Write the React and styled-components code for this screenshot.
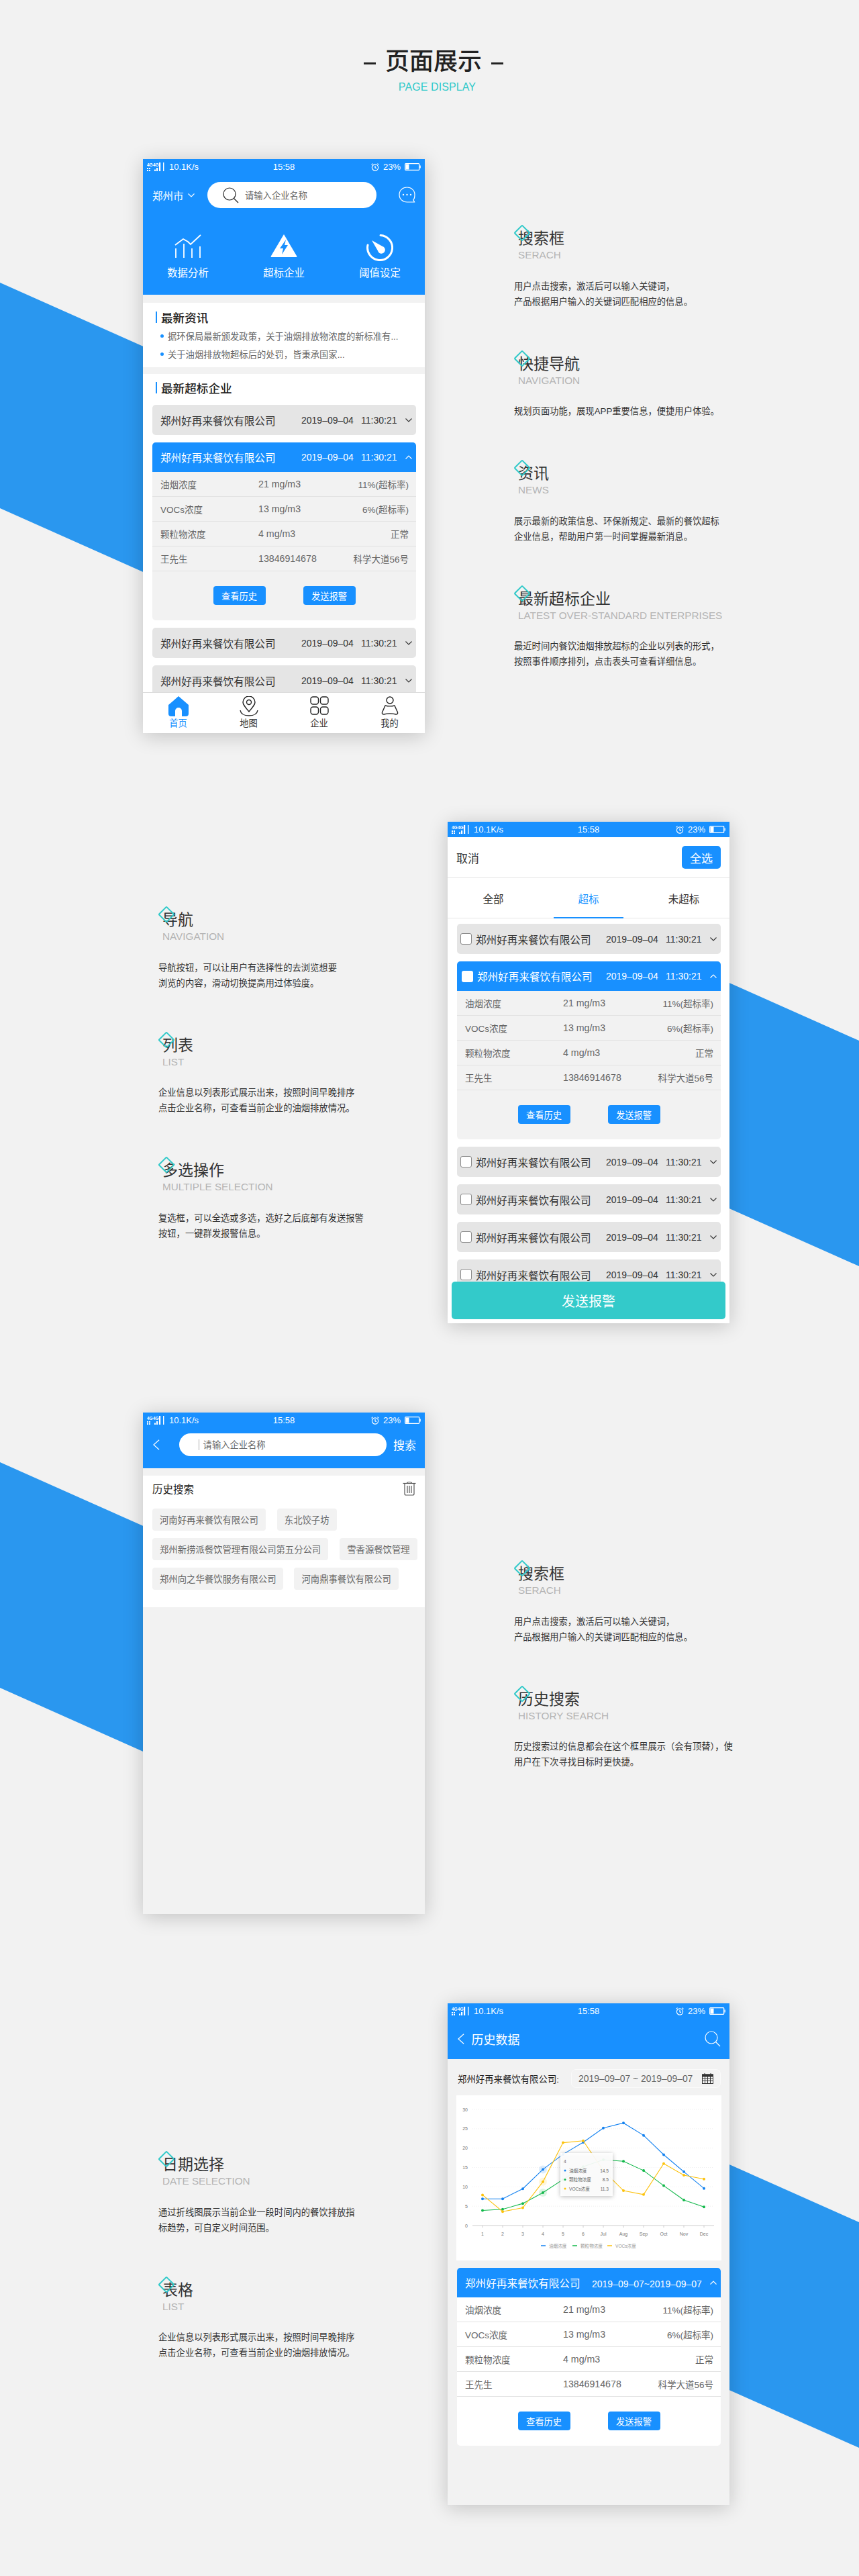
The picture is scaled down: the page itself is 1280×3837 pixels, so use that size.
import React from "react";
import styled, { createGlobalStyle } from "styled-components";

const BLUE = "#1890ff";
const TEAL = "#2fc9c9";
const Global = createGlobalStyle`
  html, body { margin: 0; padding: 0; background: #f2f2f2; }
  * { box-sizing: border-box; }
  body { font-family: "Liberation Sans", "Noto Sans CJK SC", sans-serif; color: #333; }
`;

const Page = styled.div`position: relative; width: 1280px; height: 3837px; overflow: hidden; background: #f2f2f2;`;
const Backdrop = styled.svg`position: absolute; left: 0; top: 0;`;
const Content = styled.div`position: relative;`;

const Header = styled.header`display: flex; flex-direction: column; align-items: center; padding: 72px 0 97px 12px;`;
const TitleRow = styled.div`display: flex; align-items: center; gap: 14px; height: 40px;`;
const Dash = styled.i`display: block; width: 18px; height: 3px; background: #222; margin-top: 4px;`;
const Title = styled.h1`margin: 0; font-size: 36px; line-height: 40px; font-weight: 500; color: #222; letter-spacing: 0;`;
const Subtitle = styled.div`margin: 8px 0 0 11px; font-size: 16px; line-height: 20px; color: ${TEAL}; letter-spacing: 0.1px;`;

const Section = styled.section`
  display: grid;
  padding-left: ${p => (p.$phoneRight ? "236px" : "213px")};
  grid-template-columns: ${p => (p.$phoneRight ? "431px 420px" : "420px 1fr")};
  column-gap: ${p => (p.$phoneRight ? "0" : "133px")};
  margin-bottom: ${p => p.$after || 133}px;
`;
const Notes = styled.div`padding-top: ${p => p.$top}px;`;
const Note = styled.div`margin-bottom: 66px;`;
const NoteTitle = styled.h3`
  position: relative; margin: 0 0 0 6px; font-size: 23px; line-height: 30px; font-weight: 400; color: #333;
  &::before {
    content: ""; position: absolute; left: -3px; top: -2px; width: 14px; height: 14px;
    border: 2.5px solid ${TEAL}; border-radius: 2px; transform: rotate(45deg);
  }
`;
const NoteEn = styled.div`margin-left: 6px; font-size: 15.3px; line-height: 20px; color: #b4b4b4; white-space: nowrap;`;
const NoteBody = styled.p`margin: 24.5px 0 0; font-size: 13.3px; line-height: 23px; color: #333; white-space: nowrap;`;

const Phone = styled.div`
  display: flex; flex-direction: column; width: 420px; height: ${p => p.$h}px; overflow: hidden;
  background: ${p => p.$bg || "#fff"};
  box-shadow: 0 4px 28px rgba(0,0,0,.2);
`;
const StatusBar = styled.div`
  flex: none; display: grid; grid-template-columns: 1fr auto 1fr; align-items: center; height: 23px; padding: 0 6px;
  background: ${BLUE}; color: #fff; font-size: 13px;
`;
const StatusSide = styled.div`display: flex; align-items: center; gap: 6px; justify-content: ${p => (p.$end ? "flex-end" : "flex-start")};`;

const TopBar = styled.div`flex: none; background: ${BLUE}; color: #fff;`;
const SearchRow = styled.div`display: flex; align-items: center; height: 39px; margin-top: 11px; padding-left: 14px;`;
const City = styled.div`display: flex; align-items: center; gap: 6px; width: 82px; font-size: 15.5px;`;
const SearchPill = styled.div`
  display: flex; align-items: center; width: ${p => p.$w}px; height: ${p => p.$h}px; padding-left: ${p => p.$pad}px; gap: ${p => p.$gap}px;
  margin-left: ${p => p.$ml || 0}px;
  border-radius: 20px; background: #fff; color: #666; font-size: 13.3px;
`;
const ChatSlot = styled.div`margin-left: 33px; display: flex;`;
const Shortcuts = styled.div`display: grid; grid-template-columns: repeat(3, 143px); justify-content: center; margin-top: 39px; padding-bottom: 22px;`;
const Shortcut = styled.div`display: flex; flex-direction: column; align-items: center; font-size: 15.4px;`;
const ShortcutIcon = styled.div`height: 36px; margin-bottom: 12px; display: flex; align-items: flex-start;`;
const ShortcutLabel = styled.div`line-height: 20px;`;

const Gap = styled.div`flex: none; height: ${p => p.$h}px; background: #f2f2f2;`;
const White = styled.div`flex: none; background: #fff;`;
const SectionHead = styled.div`display: flex; align-items: center; gap: 6px; height: 20px; padding-left: 19px; font-size: 17.6px; font-weight: 500; color: #222;
  &::before { content: ""; width: 2px; height: 17px; background: ${BLUE}; }
`;
const NewsBlock = styled(White)`padding-top: 11px; padding-bottom: 6px; height: 96px;`;
const NewsList = styled.ul`list-style: none; margin: 5px 0 0; padding: 0 0 0 26px;`;
const NewsItem = styled.li`display: flex; align-items: center; gap: 6px; height: 27px; font-size: 13.3px; color: #666; white-space: nowrap;
  &::before { content: ""; width: 5px; height: 5px; border-radius: 50%; background: ${BLUE}; }
`;
const ListHeadBlock = styled(White)`padding: 10px 0 6px;`;
const Scroll = styled.div`flex: 1; min-height: 0; overflow: hidden; background: #fff; padding: ${p => p.$top}px 13px 0 14px;`;
const CardList = styled.div`display: flex; flex-direction: column; gap: ${p => p.$gap || 11}px;`;

const Card = styled.div`flex: none; width: 393px; border-radius: 5px; overflow: hidden; background: ${p => p.$white ? "#fff" : "#f2f2f2"};`;
const CardHead = styled.div`
  display: flex; align-items: center; height: ${p => (p.$active ? 44 : 45)}px;
  padding-left: ${p => p.$pad}px; padding-right: 6px; gap: 6px;
  background: ${p => (p.$active ? BLUE : "#e5e5e5")}; color: ${p => (p.$active ? "#fff" : "#333")};
`;
const Check = styled.i`flex: none; width: 17px; height: 17px; border-radius: 3px; background: #fff; border: ${p => (p.$active ? "0" : "1px solid #8a8a8a")};`;
const CardName = styled.div`font-size: 15.6px; white-space: nowrap;`;
const CardMeta = styled.div`position: relative; margin-left: auto; display: grid; grid-template-columns: ${p => p.$range ? "155px 10px" : "79px 52px 10px"}; column-gap: ${p => p.$range ? "0" : "10px"}; width: 165px; align-items: center; font-size: 14px; white-space: nowrap; color: inherit;
  ${p => p.$range ? "" : "& > svg { margin-left: 4px; }"}
`;
const Range = styled.span`margin-left: -21px; padding-top: 4px;`;
const RowItem = styled.div`
  display: grid; grid-template-columns: 146px 1fr auto; align-items: center; height: 37px; padding: 0 11px 0 12px;
  border-bottom: 1px solid #e2e2e2; font-size: 13.5px; color: #666; white-space: nowrap;
`;
const RowValue = styled.span`font-size: 14.2px;`;
const Actions = styled.div`display: flex; justify-content: center; gap: 56px; padding: 22px 0 23px;`;
const SmallButton = styled.div`width: 78px; height: 28px; border-radius: 4px; background: ${BLUE}; color: #fff; font-size: 13.3px; display: flex; align-items: center; justify-content: center;`;

const Nav = styled.nav`flex: none; display: grid; grid-template-columns: repeat(4, 1fr); height: 61px; background: #fff; border-top: 1px solid #ddd;`;
const NavItem = styled.div`display: flex; flex-direction: column; align-items: center; padding-top: 5px; font-size: 13.3px; color: ${p => (p.$on ? BLUE : "#333")};`;
const NavIcon = styled.div`height: 30px; display: flex;`;
const NavLabel = styled.div`line-height: 16px; margin-top: 3px;`;

const ActionBar = styled.div`flex: none; display: flex; align-items: center; justify-content: space-between; height: 61px; padding: 0 13px 0 13px; border-bottom: 1px solid #e5e5e5; background: #fff; font-size: 17px; color: #333;`;
const SelectAll = styled.div`width: 58px; height: 34px; border-radius: 5px; background: ${BLUE}; color: #fff; display: flex; align-items: center; justify-content: center;`;
const Tabs = styled.div`flex: none; display: grid; grid-template-columns: repeat(3, 142px); justify-content: center; height: 60px; border-bottom: 1px solid #e5e5e5; background: #fff;`;
const Tab = styled.div`display: flex; align-items: center; justify-content: center; position: relative; font-size: 15.5px; color: ${p => (p.$on ? BLUE : "#333")};
  ${p => p.$on ? `&::after { content: ""; position: absolute; left: 19px; right: 19px; bottom: -1px; height: 2px; background: ${BLUE}; }` : ""}
`;
const Footer = styled.div`flex: none; padding: 0 6px 6px; background: transparent;`;
const SendButton = styled.div`height: 56px; border-radius: 5px; background: #33caca; color: #fff; font-size: 20px; display: flex; align-items: center; justify-content: center;`;

const SearchHead = styled.div`flex: none; display: flex; align-items: center; height: 60px; background: ${BLUE}; color: #fff; padding: 0 13px 11px 15px;`;
const Caret = styled.i`width: 1px; height: 16px; background: #aaa;`;
const SearchText = styled.div`margin-left: auto; font-size: 17px;`;
const HistoryBlock = styled(White)`height: 196px; padding: 0 13px 0 14px;`;
const HistoryHead = styled.div`display: flex; align-items: center; justify-content: space-between; height: 38px; font-size: 15.5px; color: #222;`;
const TagRows = styled.div`display: flex; flex-direction: column; gap: 11px; margin-top: 11px;`;
const TagRow = styled.div`display: flex; gap: ${p => p.$gap || 17}px;`;
const Tag = styled.div`height: 33px; padding: 0 11px; border-radius: 4px; background: #f2f2f2; color: #666; font-size: 13.35px; display: flex; align-items: center; white-space: nowrap;`;

const TitleHead = styled.div`flex: none; display: flex; align-items: center; height: 60px; background: ${BLUE}; color: #fff; font-size: 18px; gap: 11px; padding: 0 13px 0 15px;`;
const Spacer = styled.div`flex: 1;`;
const FilterRow = styled.div`flex: none; display: flex; align-items: center; justify-content: space-between; height: 28px; margin-top: 15px; padding: 0 13px 0 15px; font-size: 13.4px; color: #222; white-space: nowrap;`;
const DateInput = styled.div`display: flex; align-items: center; justify-content: space-between; width: 223px; height: 28px; padding: 0 10px; border: 1px solid #fafafa; border-radius: 7px; background: #f3f3f3; font-size: 13.9px; color: #666;`;
const ChartCard = styled.div`flex: none; width: 395px; height: 246px; margin: 11px 0 11px 13px; background: #fff; display: flex;`;
const Pad = styled.div`padding: 0 13px 0 14px;`;

/* icons */
const Chevron = ({ up, c = "currentColor", s = 10 }) => (
  <svg width={s} height={s * 0.6} viewBox="0 0 10 6" fill="none" stroke={c} strokeWidth="1.1">
    <polyline points={up ? "0.5,5.5 5,1 9.5,5.5" : "0.5,0.5 5,5 9.5,0.5"} />
  </svg>
);
const Signal = () => (
  <svg width="27" height="13" viewBox="0 0 27 13" fill="#fff">
    <text x="0" y="6" fontSize="6.5" fontWeight="700" fontFamily="Liberation Sans">4G</text>
    <text x="9" y="6" fontSize="6.5" fontWeight="700" fontFamily="Liberation Sans">4G</text>
    <rect x="0" y="8" width="2" height="2" /><rect x="3" y="8" width="2" height="2" />
    <rect x="0" y="11" width="2" height="2" /><rect x="3" y="11" width="2" height="2" />
    <rect x="11" y="10.5" width="2" height="2.5" /><rect x="14" y="8" width="2.2" height="5" />
    <rect x="18" y="0" width="2.2" height="13" /><rect x="24" y="0" width="1.4" height="13" />
  </svg>
);
const Alarm = () => (
  <svg width="12" height="12" viewBox="0 0 12 12" fill="none" stroke="#fff" strokeWidth="1.2">
    <circle cx="6" cy="6.5" r="4.6" /><polyline points="6,3.8 6,6.8 8,7.6" /><path d="M0.5 2.4 L2.6 0.6 M11.5 2.4 L9.4 0.6" />
  </svg>
);
const Battery = () => (
  <svg width="24" height="11" viewBox="0 0 24 11">
    <rect x="0.7" y="0.7" width="21" height="9.6" rx="1" fill="none" stroke="#fff" strokeWidth="1.3" />
    <rect x="1.5" y="1.5" width="5" height="8" fill="#fff" /><rect x="22.4" y="3.5" width="1.4" height="4" fill="#fff" />
  </svg>
);
const Status = () => (
  <StatusBar>
    <StatusSide><Signal /><span>10.1K/s</span></StatusSide>
    <span>15:58</span>
    <StatusSide $end><Alarm /><span>23%</span><Battery /></StatusSide>
  </StatusBar>
);
const Magnifier = ({ c = "#222", s = 24, w = 1.2 }) => (
  <svg width={s} height={s} viewBox="0 0 24 24" fill="none" stroke={c} strokeWidth={w}>
    <circle cx="10" cy="10" r="9" /><line x1="16.5" y1="16.5" x2="23" y2="23" />
  </svg>
);
const Chat = () => (
  <svg width="25" height="25" viewBox="0 0 25 25" fill="none" stroke="#fff" strokeWidth="1.2">
    <path d="M12.5 1C6 1 1 5.6 1 12s5 11 11.5 11h11l-1.6-3.4C24 17.6 24 14.5 24 12 24 5.6 19 1 12.5 1z" />
    <circle cx="7" cy="12" r="1.2" fill="#fff" stroke="none" /><circle cx="12.5" cy="12" r="1.2" fill="#fff" stroke="none" /><circle cx="18" cy="12" r="1.2" fill="#fff" stroke="none" />
  </svg>
);
const AnalysisIcon = () => (
  <svg width="40" height="36" viewBox="0 0 40 36" fill="none" stroke="#fff" strokeWidth="1.8">
    <polyline points="1,16 13,7 20,11 24,15 39,1" />
    <line x1="2" y1="21" x2="2" y2="35" /><line x1="14" y1="14" x2="14" y2="35" /><line x1="26" y1="21" x2="26" y2="35" /><line x1="38" y1="18" x2="38" y2="35" />
  </svg>
);
const WarnIcon = () => (
  <svg width="40" height="36" viewBox="0 0 40 36">
    <path d="M20 0 L39.5 33 a1 1 0 0 1-1 1 H1.5 a1 1 0 0 1-1-1z" fill="#fff" />
    <path d="M23 8 L14 21 H19 L17 30 L26 16 H21z" fill={BLUE} />
  </svg>
);
const DialIcon = () => (
  <svg width="40" height="40" viewBox="0 0 40 40">
    <path d="M21 1.5 A18.5 18.5 0 1 1 2 16" fill="none" stroke="#fff" strokeWidth="3" strokeLinecap="round" />
    <path d="M8 9 L24 18 A5.5 5.5 0 1 1 17 24.5z" fill="#fff" />
  </svg>
);
const Home = () => (
  <svg width="30" height="30" viewBox="0 0 30 30"><path d="M15 0 L30 13 V26 a4 4 0 0 1-4 4 H20 V22 a5 5 0 0 0-10 0 V30 H4 a4 4 0 0 1-4-4 V13z" fill={BLUE} /></svg>
);
const Pin = () => (
  <svg width="28" height="30" viewBox="0 0 28 30" fill="none" stroke="#222" strokeWidth="1.4">
    <path d="M14 23 C8 16 5 12.5 5 9 A9 9 0 0 1 23 9 C23 12.5 20 16 14 23z" /><circle cx="14" cy="9" r="3.5" />
    <path d="M1 21 C2 27 8 29 14 29 C20 29 26 27 27 21" />
  </svg>
);
const Grid4 = () => (
  <svg width="28" height="28" viewBox="0 0 28 28" fill="none" stroke="#222" strokeWidth="1.4">
    <rect x="1" y="1" width="11.5" height="11" rx="3.5" /><rect x="15.5" y="1" width="11.5" height="11" rx="3.5" />
    <rect x="1" y="16" width="11.5" height="11" rx="3.5" /><rect x="15.5" y="16" width="11.5" height="11" rx="3.5" />
  </svg>
);
const User = () => (
  <svg width="26" height="28" viewBox="0 0 26 28" fill="none" stroke="#222" strokeWidth="1.4">
    <circle cx="13" cy="6" r="5" />
    <path d="M6 14 C10 15 16 15 20 14 L24.5 24 C25 26 24 27 22 27 C16 25.5 10 25.5 4 27 C2 27 1 26 1.5 24z" />
  </svg>
);
const Back = ({ h = 16 }) => (
  <svg width={h * 0.6} height={h} viewBox="0 0 10 16" fill="none" stroke="#fff" strokeWidth="1.2"><polyline points="9.5,0.5 1,8 9.5,15.5" /></svg>
);
const Trash = () => (
  <svg width="20" height="22" viewBox="0 0 20 22" fill="none" stroke="#555" strokeWidth="1.2">
    <line x1="0.5" y1="3.5" x2="19.5" y2="3.5" /><path d="M6.5 3 C7 1 13 1 13.5 3" />
    <path d="M3 4 V19 a2 2 0 0 0 2 2 H15 a2 2 0 0 0 2-2 V4" /><line x1="7" y1="7" x2="7" y2="18" /><line x1="10" y1="7" x2="10" y2="18" /><line x1="13" y1="7" x2="13" y2="18" />
  </svg>
);
const Calendar = () => (
  <svg width="17" height="16" viewBox="0 0 17 16" fill="none" stroke="#333" strokeWidth="1">
    <rect x="0.5" y="2" width="16" height="13.5" /><rect x="0.5" y="2" width="16" height="3" fill="#333" />
    <path d="M4 0 V3 M13 0 V3 M0.5 8 H16.5 M0.5 11.5 H16.5 M4.5 5 V15.5 M8.5 5 V15.5 M12.5 5 V15.5" />
  </svg>
);

/* chart */
const series = [
  { c: "#1482f0", v: [6.9, 6.9, 9.5, 14.5, 18.4, 21.5, 25.2, 26.5, 23.3, 18.3, 13.9, 9.6] },
  { c: "#12b84a", v: [3.9, 4.2, 5.7, 8.5, 11.9, 15.2, 17, 16.6, 14.2, 10.3, 6.6, 4.8] },
  { c: "#fcc20c", v: [7.9, 3.6, 4.6, 11.3, 21.4, 21.9, 14.2, 9, 8, 16, 13, 12] },
];
const months = ["1", "2", "3", "4", "5", "6", "Jul", "Aug", "Sep", "Oct", "Nov", "Dec"];
const px = i => 39 + i * 30;
const py = v => 194 - v * (173 / 30);
const tick = { fontSize: 7, fill: "#777", fontFamily: "Liberation Sans" };
const small = { fontSize: 6.6, fill: "#666", fontFamily: "Liberation Sans, Noto Sans CJK SC" };
const ChartTip = styled.rect`filter: drop-shadow(0 1px 3px rgba(0,0,0,.3));`;
const Chart = () => (
  <svg width="395" height="246" viewBox="0 0 395 246">
    {[5, 10, 15, 20, 25, 30].map(v => (
      <line key={v} x1="24" x2="384" y1={py(v)} y2={py(v)} stroke="#eee" strokeDasharray="1 2" />
    ))}
    <line x1="24" x2="384" y1="194" y2="194" stroke="#ccc" />
    {[0, 5, 10, 15, 20, 25, 30].map(v => (
      <text key={v} x="17" y={py(v) + 2.5} textAnchor="end" {...tick}>{v}</text>
    ))}
    {months.map((m, i) => (
      <g key={m}>
        <line x1={px(i)} x2={px(i)} y1="194" y2="197" stroke="#ccc" />
        <text x={px(i)} y="208.5" textAnchor="middle" {...tick}>{m}</text>
      </g>
    ))}
    {series.map(s => (
      <g key={s.c}>
        <polyline fill="none" stroke={s.c} strokeWidth="1.1" points={s.v.map((v, i) => `${px(i)},${py(v)}`).join(" ")} />
        <circle cx={px(3)} cy={py(s.v[3])} r="6" fill={s.c} opacity=".15" />
        {s.v.map((v, i) => <circle key={i} cx={px(i)} cy={py(v)} r="2" fill={s.c} />)}
      </g>
    ))}
    <ChartTip x="155" y="86" width="78" height="64" fill="#fff" fillOpacity=".92" />
    <text x="160" y="101" {...small}>4</text>
    {[["油烟浓度", "14.5", 0], ["颗粒物浓度", "8.5", 1], ["VOCs浓度", "11.3", 2]].map(([l, n, i]) => (
      <g key={l}>
        <circle cx="162" cy={112 + i * 13.5} r="1.5" fill={series[i].c} />
        <text x="168" y={114.5 + i * 13.5} {...small}>{l}</text>
        <text x="227" y={114.5 + i * 13.5} textAnchor="end" {...small}>{n}</text>
      </g>
    ))}
    {[["油烟浓度", 126, 0], ["颗粒物浓度", 173, 1], ["VOCs浓度", 225, 2]].map(([l, x, i]) => (
      <g key={l}>
        <line x1={x} x2={x + 7} y1="224" y2="224" stroke={series[i].c} strokeWidth="1.5" />
        <text x={x + 12} y="226.5" {...small} fill="#999">{l}</text>
      </g>
    ))}
  </svg>
);

/* shared pieces */
const NAME = "郑州好再来餐饮有限公司";
const Meta = ({ up }) => (
  <CardMeta><span>2019–09–04</span><span>11:30:21</span><Chevron up={up} /></CardMeta>
);
const ClosedCard = ({ check }) => (
  <Card>
    <CardHead $pad={check ? 5 : 12}>
      {check && <Check />}<CardName>{NAME}</CardName><Meta />
    </CardHead>
  </Card>
);
const Details = () => (
  <>
    <RowItem><span>油烟浓度</span><RowValue>21 mg/m3</RowValue><span>11%(超标率)</span></RowItem>
    <RowItem><span>VOCs浓度</span><RowValue>13 mg/m3</RowValue><span>6%(超标率)</span></RowItem>
    <RowItem><span>颗粒物浓度</span><RowValue>4 mg/m3</RowValue><span>正常</span></RowItem>
    <RowItem><span>王先生</span><RowValue>13846914678</RowValue><span>科学大道56号</span></RowItem>
    <Actions><SmallButton>查看历史</SmallButton><SmallButton>发送报警</SmallButton></Actions>
  </>
);
const OpenCard = ({ check }) => (
  <Card>
    <CardHead $active $pad={check ? 7 : 12}>
      {check && <Check $active />}<CardName>{NAME}</CardName><Meta up />
    </CardHead>
    <Details />
  </Card>
);
const Block = ({ t, en, lines }) => (
  <Note>
    <NoteTitle>{t}</NoteTitle>
    <NoteEn>{en}</NoteEn>
    <NoteBody>{lines[0]}{lines[1] && <br />}{lines[1]}</NoteBody>
  </Note>
);
const band = (x1, t1, x2, t2) => `${x1},${t1} ${x2},${t2} ${x2},${t2 + 336} ${x1},${t1 + 336}`;

export default function App() {
  return (
    <Page>
      <Global />
      <Backdrop width="1280" height="3837" viewBox="0 0 1280 3837">
        <polygon fill="#2a97ef" points={band(0, 421, 300, 554.5)} />
        <polygon fill="#2a97ef" points={band(900, 1381, 1280, 1550)} />
        <polygon fill="#2a97ef" points={band(0, 2178, 300, 2311.5)} />
        <polygon fill="#2a97ef" points={band(900, 3141, 1280, 3310)} />
      </Backdrop>
      <Content>
        <Header>
          <TitleRow><Dash /><Title>页面展示</Title><Dash /></TitleRow>
          <Subtitle>PAGE DISPLAY</Subtitle>
        </Header>

        <Section $after={132}>
          <Phone $h={855}>
            <Status />
            <TopBar>
              <SearchRow>
                <City>郑州市<Chevron c="#fff" /></City>
                <SearchPill $w={252} $h={39} $pad={23} $gap={9}><Magnifier />请输入企业名称</SearchPill>
                <ChatSlot><Chat /></ChatSlot>
              </SearchRow>
              <Shortcuts>
                <Shortcut><ShortcutIcon><AnalysisIcon /></ShortcutIcon><ShortcutLabel>数据分析</ShortcutLabel></Shortcut>
                <Shortcut><ShortcutIcon><WarnIcon /></ShortcutIcon><ShortcutLabel>超标企业</ShortcutLabel></Shortcut>
                <Shortcut><ShortcutIcon><DialIcon /></ShortcutIcon><ShortcutLabel>阈值设定</ShortcutLabel></Shortcut>
              </Shortcuts>
            </TopBar>
            <Gap $h={12} />
            <NewsBlock>
              <SectionHead>最新资讯</SectionHead>
              <NewsList>
                <NewsItem>据环保局最新颁发政策，关于油烟排放物浓度的新标准有...</NewsItem>
                <NewsItem>关于油烟排放物超标后的处罚，皆秉承国家...</NewsItem>
              </NewsList>
            </NewsBlock>
            <Gap $h={10} />
            <ListHeadBlock>
              <SectionHead>最新超标企业</SectionHead>
            </ListHeadBlock>
            <Scroll $top={10}>
              <CardList>
                <ClosedCard />
                <OpenCard />
                <ClosedCard />
                <ClosedCard />
              </CardList>
            </Scroll>
            <Nav>
              <NavItem $on><NavIcon><Home /></NavIcon><NavLabel>首页</NavLabel></NavItem>
              <NavItem><NavIcon><Pin /></NavIcon><NavLabel>地图</NavLabel></NavItem>
              <NavItem><NavIcon><Grid4 /></NavIcon><NavLabel>企业</NavLabel></NavItem>
              <NavItem><NavIcon><User /></NavIcon><NavLabel>我的</NavLabel></NavItem>
            </Nav>
          </Phone>
          <Notes $top={103}>
            <Block t="搜索框" en="SERACH" lines={["用户点击搜索，激活后可以输入关键词，", "产品根据用户输入的关键词匹配相应的信息。"]} />
            <Block t="快捷导航" en="NAVIGATION" lines={["规划页面功能，展现APP重要信息，便捷用户体验。"]} />
            <Block t="资讯" en="NEWS" lines={["展示最新的政策信息、环保新规定、最新的餐饮超标", "企业信息，帮助用户第一时间掌握最新消息。"]} />
            <Block t="最新超标企业" en="LATEST OVER-STANDARD ENTERPRISES" lines={["最近时间内餐饮油烟排放超标的企业以列表的形式，", "按照事件顺序排列，点击表头可查看详细信息。"]} />
          </Notes>
        </Section>

        <Section $phoneRight>
          <Notes $top={131}>
            <Block t="导航" en="NAVIGATION" lines={["导航按钮，可以让用户有选择性的去浏览想要", "浏览的内容，滑动切换提高用过体验度。"]} />
            <Block t="列表" en="LIST" lines={["企业信息以列表形式展示出来，按照时间早晚排序", "点击企业名称，可查看当前企业的油烟排放情况。"]} />
            <Block t="多选操作" en="MULTIPLE SELECTION" lines={["复选框，可以全选或多选，选好之后底部有发送报警", "按钮，一键群发报警信息。"]} />
          </Notes>
          <Phone $h={747}>
            <Status />
            <ActionBar><span>取消</span><SelectAll>全选</SelectAll></ActionBar>
            <Tabs><Tab>全部</Tab><Tab $on>超标</Tab><Tab>未超标</Tab></Tabs>
            <Scroll $top={8}>
              <CardList>
                <ClosedCard check />
                <OpenCard check />
                <ClosedCard check />
                <ClosedCard check />
                <ClosedCard check />
                <ClosedCard check />
              </CardList>
            </Scroll>
            <Footer><SendButton>发送报警</SendButton></Footer>
          </Phone>
        </Section>

        <Section>
          <Phone $h={747} $bg="#f2f2f2">
            <Status />
            <SearchHead>
              <Back />
              <SearchPill $w={309} $h={34} $pad={29} $gap={6} $ml={29}><Caret />请输入企业名称</SearchPill>
              <SearchText>搜索</SearchText>
            </SearchHead>
            <Gap $h={11} />
            <HistoryBlock>
              <HistoryHead><span>历史搜索</span><Trash /></HistoryHead>
              <TagRows>
                <TagRow><Tag>河南好再来餐饮有限公司</Tag><Tag>东北饺子坊</Tag></TagRow>
                <TagRow><Tag>郑州新捞派餐饮管理有限公司第五分公司</Tag><Tag>雪香源餐饮管理</Tag></TagRow>
                <TagRow $gap={16}><Tag>郑州向之华餐饮服务有限公司</Tag><Tag>河南鼎事餐饮有限公司</Tag></TagRow>
              </TagRows>
            </HistoryBlock>
          </Phone>
          <Notes $top={225}>
            <Block t="搜索框" en="SERACH" lines={["用户点击搜索，激活后可以输入关键词，", "产品根据用户输入的关键词匹配相应的信息。"]} />
            <Block t="历史搜索" en="HISTORY SEARCH" lines={["历史搜索过的信息都会在这个框里展示（会有顶替），使", "用户在下次寻找目标时更快捷。"]} />
          </Notes>
        </Section>

        <Section $phoneRight>
          <Notes $top={225}>
            <Block t="日期选择" en="DATE SELECTION" lines={["通过折线图展示当前企业一段时间内的餐饮排放指", "标趋势，可自定义时间范围。"]} />
            <Block t="表格" en="LIST" lines={["企业信息以列表形式展示出来，按照时间早晚排序", "点击企业名称，可查看当前企业的油烟排放情况。"]} />
          </Notes>
          <Phone $h={747} $bg="#f2f2f2">
            <Status />
            <TitleHead><Back />历史数据<Spacer /><Magnifier c="#fff" /></TitleHead>
            <FilterRow>
              <span>{NAME}:</span>
              <DateInput><span>2019–09–07 ~ 2019–09–07</span><Calendar /></DateInput>
            </FilterRow>
            <ChartCard><Chart /></ChartCard>
            <Pad>
              <Card $white>
                <CardHead $active $pad={12}>
                  <CardName>{NAME}</CardName>
                  <CardMeta $range><Range>2019–09–07~2019–09–07</Range><Chevron up /></CardMeta>
                </CardHead>
                <Details />
              </Card>
            </Pad>
          </Phone>
        </Section>
      </Content>
    </Page>
  );
}
